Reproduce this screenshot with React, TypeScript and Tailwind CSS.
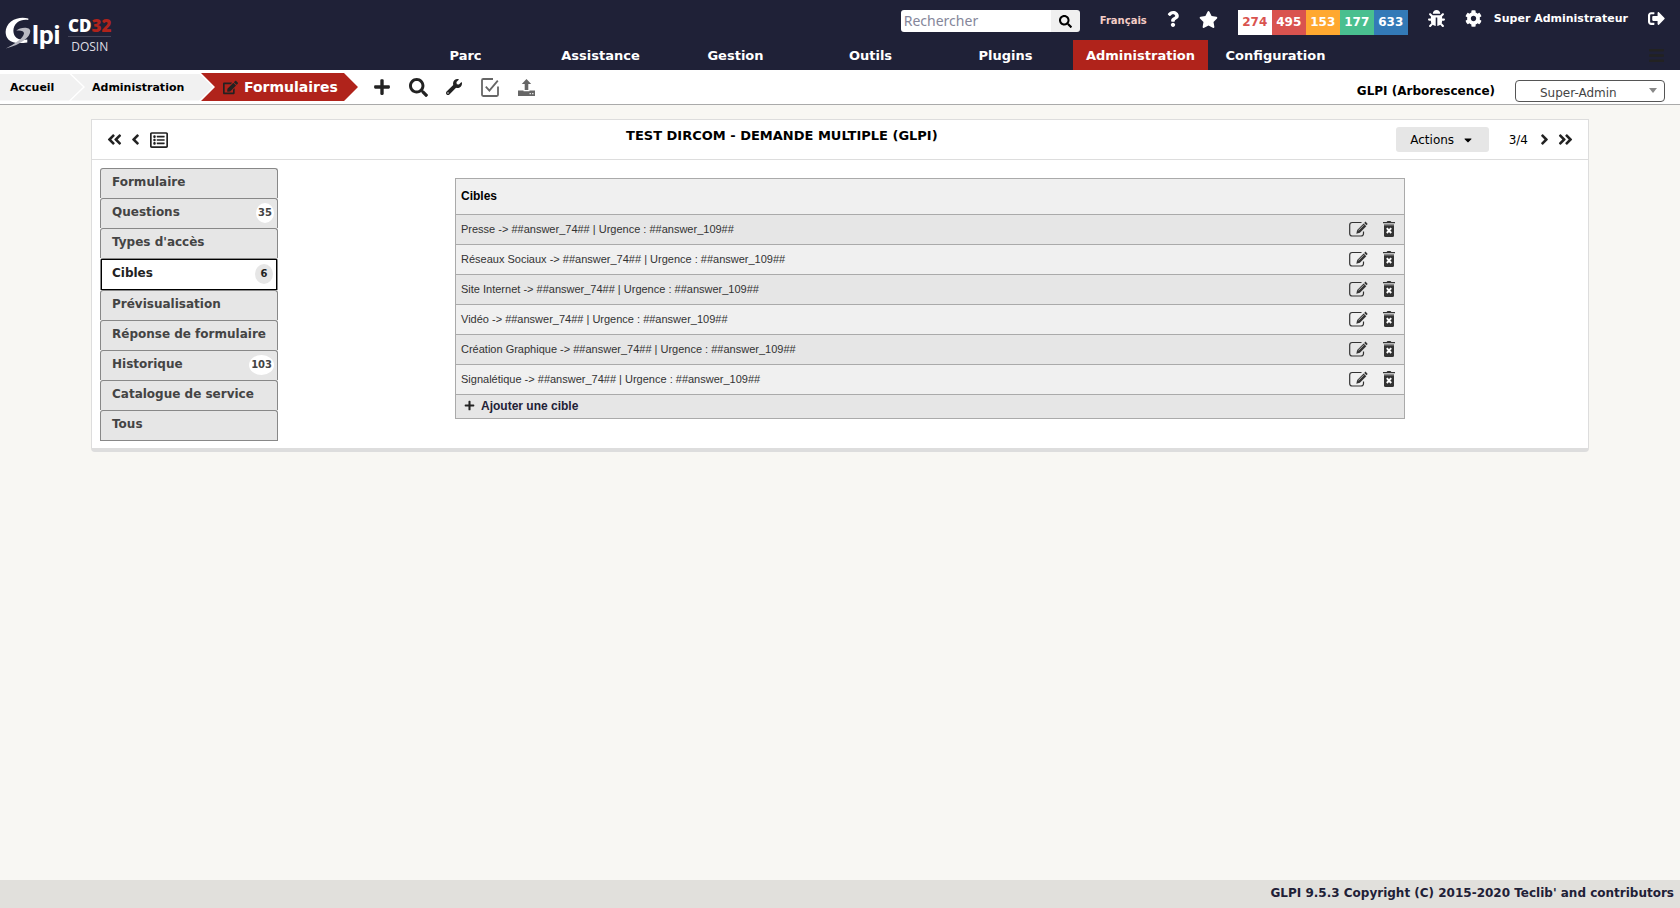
import React from "react";
import {
  FaAngleDoubleLeft,
  FaAngleDoubleRight,
  FaAngleLeft,
  FaAngleRight,
  FaBars,
  FaBug,
  FaCaretDown,
  FaCog,
  FaEdit,
  FaPlus,
  FaQuestion,
  FaRegListAlt,
  FaSearch,
  FaSignOutAlt,
  FaStar,
  FaWrench,
} from "react-icons/fa";

const menu = ["Parc", "Assistance", "Gestion", "Outils", "Plugins", "Administration", "Configuration"];

const counters = [
  { value: 274, style: "bg-white text-[#d9534f]" },
  { value: 495, style: "bg-[#d9534f] text-white" },
  { value: 153, style: "bg-[#ffa830] text-white" },
  { value: 177, style: "bg-[#49bf8f] text-white" },
  { value: 633, style: "bg-[#337ab7] text-white" },
];

const tabs: { label: string; count?: number }[] = [
  { label: "Formulaire" },
  { label: "Questions", count: 35 },
  { label: "Types d'accès" },
  { label: "Cibles", count: 6 },
  { label: "Prévisualisation" },
  { label: "Réponse de formulaire" },
  { label: "Historique", count: 103 },
  { label: "Catalogue de service" },
  { label: "Tous" },
];

const targets = ["Presse", "Réseaux Sociaux", "Site Internet", "Vidéo", "Création Graphique", "Signalétique"];

function Logo() {
  return (
    <a href="#" aria-label="GLPI CD32 DOSIN" className="flex items-start pl-1 pt-4 text-white">
      <svg width="28" height="34" viewBox="0 0 28 34" aria-hidden="true">
        <path
          d="M24.300 2.600C19.500 .900 12.500 1.400 7 5.400C.800 10.200-.100 18.800 4.600 23.800C8.500 27.600 16 27.600 23.300 26.400L23.300 23.400C18.500 24.300 13.500 23.700 11.200 20.500C8.300 16.500 8.800 10.400 13.200 6.600C16.200 4 20.400 3.300 24.300 4Z"
          fill="#fff"
        />
        <path
          d="M12.300 14.800C15.500 11.200 26.200 10.200 26.300 15.200C26 21.500 17.500 28 1.800 32.600C10.500 27.800 19.400 22.200 20 17.400C20 14.800 16 14 12.300 14.800Z"
          fill="#b9b9c2"
        />
      </svg>
      <span className="h-7 w-8 pt-1 font-['Liberation_Sans_Narrow','Roboto',sans-serif] text-[26px] font-bold leading-[30px]">lpi</span>
      <span className="ml-1 flex flex-col items-center">
        <span className="font-['Open_Sans',sans-serif] text-[17px] font-extrabold leading-5">
          CD<span className="text-[#b0231b]">32</span>
        </span>
        <span className="w-full border-t border-[#45465a] pt-0.5 text-center font-['Open_Sans',sans-serif] text-xs leading-4 text-[#dedee4]">
          DOSIN
        </span>
      </span>
    </a>
  );
}

function CheckBoxIcon() {
  return (
    <svg width="18" height="19" viewBox="0 0 18 19" fill="none" stroke="#666" strokeWidth="1.800" aria-hidden="true">
      <path d="M12 1H2.200Q1 1 1 2.200V16.800Q1 18 2.200 18H15.800Q17 18 17 16.800V8.500" />
      <path d="M4.800 8.600L8.400 12.600L16.800 2.600" />
    </svg>
  );
}

function UploadIcon() {
  return (
    <svg width="17" height="17" viewBox="0 0 17 17" fill="#666" aria-hidden="true">
      <path d="M8.500 0L13.200 5H10.300V11H6.700V5H3.800Z" />
      <path d="M0 11.500H5.500V12.300H11.500V11.500H17V17H0ZM11.600 14V15.200H12.800V14ZM14.200 14V15.200H15.400V14Z" fillRule="evenodd" />
    </svg>
  );
}

function EditIcon() {
  return (
    <svg width="19" height="16" viewBox="0 0 19 16" fill="none" aria-hidden="true">
      <path d="M12.500 1.500H3.200Q.700 1.500.700 4V12.500Q.700 15 3.200 15H12Q14.500 15 14.500 12.500V10.500" stroke="#333" strokeWidth="1.200" />
      <path d="M7.300 12.700L8.200 9L14.600 2.500L17.300 5.200L10.900 11.700Z" fill="#333" />
      <path d="M15.200 1.900L16.500.600L18.700 2.900L17.400 4.200Z" fill="#333" />
      <path d="M9.300 9.500L14.600 4.200" stroke="#bbb" strokeWidth=".9" />
    </svg>
  );
}

function TrashIcon() {
  return (
    <svg width="12" height="16" viewBox="0 0 12 16" aria-hidden="true">
      <path d="M0 1H3.600L4.500 0H7.500L8.400 1H12V2.300H0Z" fill="#333" />
      <path d="M1 3.200H11V14.500Q11 16 9.500 16H2.500Q1 16 1 14.500Z" fill="#333" />
      <path d="M1 3.200H11V4.400H1Z" fill="#999" />
      <path d="M3.800 7.200L8.200 12M8.200 7.200L3.800 12" stroke="#fff" strokeWidth="1.900" />
    </svg>
  );
}

function Header() {
  return (
    <header className="flex bg-[#1f2137] text-white">
      <div className="w-[398px] shrink-0">
        <Logo />
      </div>
      <div className="flex grow flex-col">
        <div className="flex h-10 items-start justify-end pr-[15px] pt-2.5">
          <form className="mr-5 flex h-[22px] overflow-hidden rounded-[3px]">
            <input
              type="text"
              aria-label="Rechercher"
              placeholder="Rechercher"
              className="w-[150px] bg-white px-[3px] font-['Noto_Sans',sans-serif] text-sm text-black placeholder:text-[#85869a]"
            />
            <button type="button" aria-label="Lancer la recherche" className="flex w-[29px] items-center justify-center bg-[#f0f0f0] text-[13px] text-black">
              <FaSearch />
            </button>
          </form>
          <a href="#" className="mr-5 text-[10px] font-bold leading-[22px] text-[#f5cdc6]">Français</a>
          <a href="#" aria-label="Aide" className="mr-5"><FaQuestion size={18} className="w-3" /></a>
          <a href="#" aria-label="Marque-pages" className="mr-5"><FaStar size={19} /></a>
          <div className="mr-5 flex">
            {counters.map((c) => (
              <a key={c.value} href="#" className={`w-[34px] text-center text-xs font-bold leading-[25px] ${c.style}`}>
                {c.value}
              </a>
            ))}
          </div>
          <a href="#" aria-label="Mode débogage" className="mr-5"><FaBug size={17} /></a>
          <a href="#" className="mr-5 flex items-center gap-3">
            <FaCog size={17} />
            <span className="text-[11px] font-bold leading-4">Super Administrateur</span>
          </a>
          <a href="#" aria-label="Déconnexion"><FaSignOutAlt size={17} /></a>
        </div>
        <nav className="flex h-[30px] items-center pr-[15px]">
          {menu.map((m) => (
            <a
              key={m}
              href="#"
              className={`w-[135px] pt-0.5 text-center text-[13px] font-bold leading-7 ${m === "Administration" ? "bg-[#b0231b]" : ""}`}
            >
              {m}
            </a>
          ))}
          <button type="button" aria-label="Menu" className="ml-auto text-[#222222]"><FaBars size={17} /></button>
        </nav>
      </div>
    </header>
  );
}

function Breadcrumb() {
  return (
    <div className="flex h-[35px] items-center border-b border-[#aaaaaa] bg-white text-black">
      <a
        href="#"
        className="w-[83px] bg-[#f1f1f1] pl-2.5 text-[11px] font-bold leading-[27px] [clip-path:polygon(0_0,calc(100%-14px)_0,100%_50%,calc(100%-14px)_100%,0_100%)]"
      >
        Accueil
      </a>
      <a
        href="#"
        className="-ml-3 w-[142px] bg-[#f1f1f1] pl-[21px] text-[11px] font-bold leading-[27px] [clip-path:polygon(0_0,calc(100%-14px)_0,100%_50%,calc(100%-14px)_100%,0_100%,14px_50%)]"
      >
        Administration
      </a>
      <a
        href="#"
        className="-ml-3 flex w-[157px] items-center gap-1.5 bg-[#b0231b] pl-[22px] text-sm font-bold leading-7 text-white [clip-path:polygon(0_0,calc(100%-14px)_0,100%_50%,calc(100%-14px)_100%,0_100%,14px_50%)]"
      >
        <FaEdit size={15} className="text-[#222222]" />
        Formulaires
      </a>
      <div className="ml-1.5 flex items-center text-[#222222]">
        <a href="#" aria-label="Ajouter" className="flex w-9 justify-center"><FaPlus size={18} /></a>
        <a href="#" aria-label="Rechercher des formulaires" className="flex w-9 justify-center"><FaSearch size={19} /></a>
        <a href="#" aria-label="Outils" className="flex w-9 justify-center"><FaWrench size={16} /></a>
        <a href="#" aria-label="Validation" className="flex w-9 justify-center"><CheckBoxIcon /></a>
        <a href="#" aria-label="Importer" className="flex w-9 justify-center"><UploadIcon /></a>
      </div>
      <a href="#" className="ml-auto mr-5 pt-2 text-xs font-bold">GLPI (Arborescence)</a>
      <div className="relative mr-[15px] mt-2">
        <select
          aria-label="Profil"
          className="block h-[22px] w-[150px] appearance-none rounded border border-[#555555] bg-white pl-6 pr-6 pt-1 text-xs text-[#444444]"
        >
          <option>Super-Admin</option>
        </select>
        <svg width="8" height="5" viewBox="0 0 8 5" className="pointer-events-none absolute right-2 top-2" aria-hidden="true">
          <path d="M0 0H8L4 5Z" fill="#888" />
        </svg>
      </div>
    </div>
  );
}

function Tabs() {
  return (
    <ul className="w-[178px] shrink-0 border-b border-[#888888] text-xs font-bold text-[#444444]">
      {tabs.map((t) => {
        const active = t.label === "Cibles";
        return (
          <li key={t.label} className="rounded-t-[3px] border border-b-0 border-[#888888] bg-[#e6e6e6]">
            <a
              href="#"
              className={`flex items-start justify-between pr-[3px] ${active ? "h-[31px] border border-black bg-white pl-2.5 text-[#222222]" : "h-[29px] pl-[11px]"}`}
            >
              <span className="whitespace-nowrap leading-[26px]">{t.label}</span>
              {t.count !== undefined && (
                <span
                  className={`mt-1 min-w-[18px] rounded-[50%] px-0.5 text-center text-[10px] leading-5 ${active ? "bg-[#e6e6e6]" : "bg-white"}`}
                >
                  {t.count}
                </span>
              )}
            </a>
          </li>
        );
      })}
    </ul>
  );
}

function TargetTable() {
  return (
    <table className="w-[950px] border-collapse border border-[#aaaaaa] font-['Liberation_Sans',Arial,sans-serif] text-[11px] text-[#333333]">
      <thead>
        <tr className="h-9 bg-[#f0f0f0]">
          <th colSpan={3} className="pb-0.5 pl-[5px] text-left text-xs text-black">Cibles</th>
        </tr>
      </thead>
      <tbody>
        {targets.map((t) => (
          <tr key={t} className="h-[30px] border-t border-[#aaaaaa] odd:bg-[#e6e6e6] even:bg-[#f0f0f0]">
            <td className="pb-px pl-[5px]">
              <a href="#">{t} -&gt; ##answer_74## | Urgence : ##answer_109##</a>
            </td>
            <td className="w-8 pb-0.5">
              <a href="#" aria-label={`Modifier ${t}`} className="flex justify-center"><EditIcon /></a>
            </td>
            <td className="w-[30px] pb-0.5">
              <a href="#" aria-label={`Supprimer ${t}`} className="flex justify-center"><TrashIcon /></a>
            </td>
          </tr>
        ))}
        <tr className="h-6 border-t border-[#aaaaaa] bg-[#e6e6e6]">
          <td colSpan={3} className="pb-0.5 pl-2">
            <a href="#" className="flex items-center gap-1.5 text-xs font-bold text-[#1f2137]">
              <FaPlus size={11} className="text-[#222222]" />
              Ajouter une cible
            </a>
          </td>
        </tr>
      </tbody>
    </table>
  );
}

export default function App() {
  return (
    <div className="flex min-h-screen flex-col bg-[#f8f7f3] font-['DejaVu_Sans',Verdana,sans-serif]">
      <Header />
      <Breadcrumb />
      <main className="mx-[91px] mb-7 mt-3.5 grow">
        <section className="rounded-b border border-b-4 border-[#dddddd] bg-white">
          <div className="flex h-10 items-center border-b border-[#dddddd] px-3.5 text-[#222222]">
            <a href="#" aria-label="Premier" className="mr-1"><FaAngleDoubleLeft size={17} /></a>
            <a href="#" aria-label="Précédent" className="mr-1.5"><FaAngleLeft size={17} /></a>
            <a href="#" aria-label="Liste"><FaRegListAlt size={18} /></a>
            <h1 className="grow self-start pt-1.5 text-center text-[13px] font-bold leading-5 text-black">
              TEST DIRCOM - DEMANDE MULTIPLE (GLPI)
            </h1>
            <button type="button" className="flex h-[25px] w-[93px] items-center justify-center gap-2 rounded-[3px] bg-[#e6e6e6] text-xs text-black">
              Actions <FaCaretDown size={12} />
            </button>
            <span className="ml-5 mr-2 text-xs text-black">3/4</span>
            <a href="#" aria-label="Suivant" className="mr-1"><FaAngleRight size={17} /></a>
            <a href="#" aria-label="Dernier"><FaAngleDoubleRight size={17} /></a>
          </div>
          <div className="flex items-start pb-[7px] pl-2 pr-1.5 pt-2">
            <Tabs />
            <div className="flex grow justify-center pt-2.5">
              <TargetTable />
            </div>
          </div>
        </section>
      </main>
      <footer className="bg-[#e1e0dc] pb-0.5 pr-1.5 text-right text-xs font-bold leading-[26px] text-[#1f2137]">
        <a href="#">GLPI 9.5.3 Copyright (C) 2015-2020 Teclib' and contributors</a>
      </footer>
    </div>
  );
}
